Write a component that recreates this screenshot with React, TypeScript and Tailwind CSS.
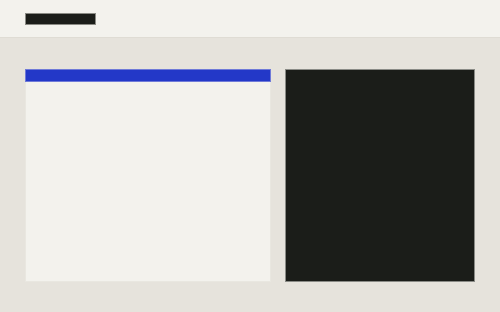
export default function App() {
  return (
    <div className="w-[500px] h-[312px] flex flex-col bg-[#e6e3dc] font-['Liberation_Sans',sans-serif]">
      {/* Header */}
      <div className="h-[38px] shrink-0 bg-[#f3f2ed] border-b border-[#dfdcd4] flex items-center px-[25px]">
        <div className="w-[71px] h-[12px] bg-[#1b1d19] border border-[#8a8a84]" />
      </div>

      {/* Body */}
      <div className="flex-1 flex gap-[14px] px-[25px] pt-[31px] pb-[30px]">
        <div className="w-[247px] flex flex-col bg-[#f3f2ed] border border-[#e9e7e0]">
          <div className="h-[13px] bg-[#2338c8] border border-[#6f7ad8] -m-px" />
        </div>
        <div className="w-[190px] bg-[#1b1d19] border border-[#8a8b86]" />
      </div>
    </div>
  )
}
